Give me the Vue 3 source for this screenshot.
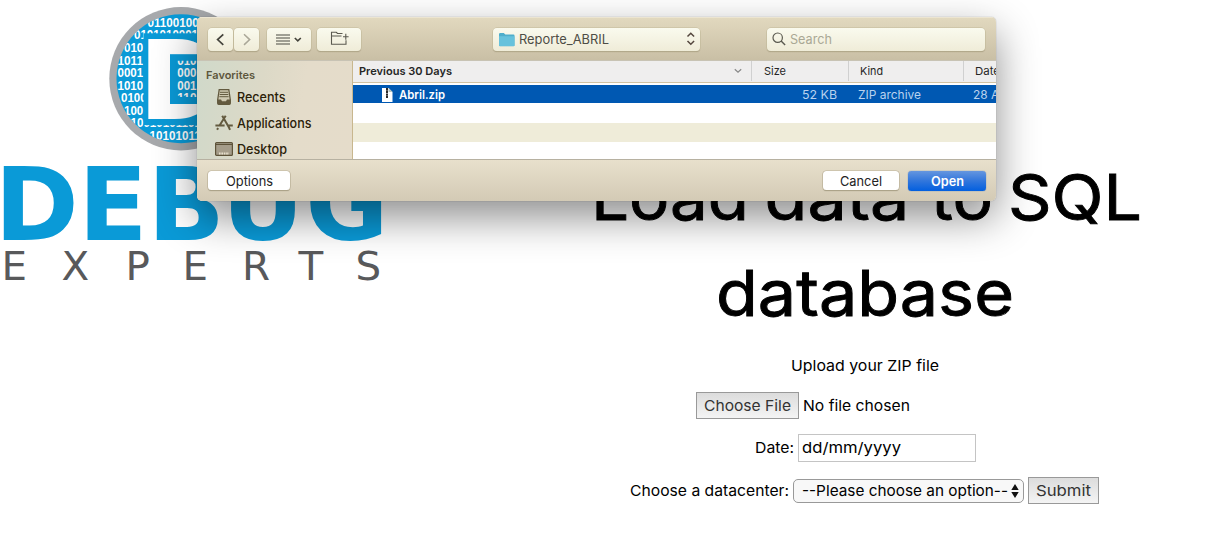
<script setup>
import { h } from 'vue'

// One line of text set to an exact width.
const Fit = (props) =>
  h('svg', { class: 'fit', width: props.w, height: 20 }, [
    h(
      'text',
      {
        x: 0,
        y: 10 + props.s * 0.36,
        'font-size': props.s,
        'font-weight': props.b || 400,
        textLength: props.w,
        lengthAdjust: 'spacingAndGlyphs',
        fill: 'currentColor',
      },
      props.t
    ),
  ])
Fit.props = ['t', 'w', 's', 'b']

const bits = [
  { x: 147.5, y: 27, t: '01100100' },
  { x: 134, y: 39.4, t: '0101010001' },
  { x: 124, y: 52.1, t: '010' },
  { x: 117.5, y: 64.6, t: '1011' },
  { x: 117.5, y: 77.3, t: '0001' },
  { x: 117.5, y: 90, t: '1010' },
  { x: 121, y: 102.4, t: '0100' },
  { x: 124, y: 114.8, t: '100' },
  { x: 130.5, y: 127.4, t: '10010101101' },
  { x: 149.5, y: 140.2, t: '10101011' },
]
const innerBits = [
  { y: 64.6, t: '010' },
  { y: 77.3, t: '000' },
  { y: 90, t: '001' },
  { y: 102.4, t: '110' },
]
</script>

<template>
  <div class="page">
    <svg class="logo" width="400" height="300" viewBox="0 0 400 300">
      <defs>
        <clipPath id="disc"><circle cx="181" cy="78.7" r="64.5" /></clipPath>
        <clipPath id="hole"><rect x="172" y="60.7" width="40" height="36.3" /></clipPath>
      </defs>
      <circle cx="181" cy="78.7" r="71.7" fill="#a7a9ac" />
      <circle cx="181" cy="78.7" r="64.5" fill="#0a9ad7" />
      <g clip-path="url(#disc)" class="bits">
        <text v-for="r in bits" :key="r.y" :x="r.x" :y="r.y" :textLength="r.t.length * 6.4" lengthAdjust="spacingAndGlyphs">{{ r.t }}</text>
        <rect x="143.5" y="33.3" width="80" height="91.8" fill="#0a9ad7" />
      </g>
      <text class="big-d" x="139.8" y="119">D</text>
      <rect x="170" y="54.2" width="30" height="49.8" fill="#0a9ad7" />
      <g clip-path="url(#hole)" class="bits">
        <text v-for="r in innerBits" :key="r.y" x="177.3" :y="r.y" textLength="19.2" lengthAdjust="spacingAndGlyphs">{{ r.t }}</text>
      </g>
      <text class="debug" x="-5.6 78.2 147.4 221.8 305.2" y="239.6">DEBUG</text>
      <text class="experts" x="1.5 58.5 119.5 173.8 230.5 284.3 338.5" y="279.8" transform="scale(1.05 1)">EXPERTS</text>
    </svg>

    <main class="content">
      <svg class="heading" width="730" height="340">
        <text y="219.5">
          <tspan x="91" textLength="158" lengthAdjust="spacingAndGlyphs">Load</tspan>
          <tspan x="264.5" textLength="145" lengthAdjust="spacingAndGlyphs">data</tspan>
          <tspan x="431" textLength="62" lengthAdjust="spacingAndGlyphs">to</tspan>
          <tspan x="508" textLength="134" lengthAdjust="spacingAndGlyphs">SQL</tspan>
        </text>
        <text x="216" y="315.5" textLength="298" lengthAdjust="spacingAndGlyphs">database</text>
      </svg>
      <div class="row upload"><Fit t="Upload your ZIP file" :w="148" :s="15" /></div>
      <div class="row file">
        <span class="btn choose"><Fit t="Choose File" :w="87" :s="15" /></span>
        <Fit t="No file chosen" :w="107" :s="15" />
      </div>
      <div class="row date">
        <Fit t="Date:" :w="39" :s="15" />
        <span class="date-input"><Fit t="dd/mm/yyyy" :w="99" :s="15" /></span>
      </div>
      <div class="row center">
        <Fit t="Choose a datacenter:" :w="159" :s="15" />
        <span class="select">
          <Fit t="--Please choose an option--" :w="206" :s="15" />
          <svg width="8" height="14" viewBox="0 0 8 14"><path d="M4 0 7.7 6H.3zM4 14 .3 8h7.4z" fill="#111" /></svg>
        </span>
        <span class="btn submit"><Fit t="Submit" :w="55" :s="15" /></span>
      </div>
    </main>

    <section class="dialog">
      <header class="toolbar">
        <span class="tb back"><svg width="25" height="23"><path d="M15.3 6.3 9.6 11.6l5.7 5.3" stroke="#45443c" stroke-width="1.7" /></svg></span>
        <span class="tb forward"><svg width="25" height="23"><path d="M10 6.3l5.7 5.3-5.7 5.3" stroke="#aaa798" stroke-width="1.5" /></svg></span>
        <span class="tb view">
          <svg width="44" height="23"><path d="M9 7h14M9 10h14M9 13h14M9 16h14" stroke="#4b4a42" stroke-width="1.1" /><path d="m27.8 10 3 2.9 3-2.9" stroke="#45443c" stroke-width="1.6" /></svg>
        </span>
        <span class="tb folder">
          <svg width="44" height="23"><path d="M25.5 5.5h-5l-1.2-1.2h-4.8v12h14.5v-4M14.5 8h10M28.8 5.8v6M26 8.8h5.6" stroke="#5b5a50" stroke-width="1.1" /></svg>
        </span>
        <span class="tb path">
          <svg width="16" height="15"><path d="M0 2.2Q0 1 1.2 1h3.6l1.5 1.5h8.2q1 0 1 1v9.8q0 1-1 1H1q-1 0-1-1z" fill="#4faecb" /><path d="M0 4.2h15.5v9.2q0 .6-.7.6H.8q-.8 0-.8-.6z" fill="#67c2dc" /></svg>
          <Fit class="path-name" t="Reporte_ABRIL" :w="90" :s="13" />
          <svg width="10" height="14"><path d="m1.5 4.5 3.3-3.2 3.3 3.2M1.5 9l3.3 3.2L8.1 9" stroke="#54463d" stroke-width="1.5" /></svg>
        </span>
        <span class="tb search">
          <svg width="14" height="14"><circle cx="5.7" cy="5.7" r="4.7" stroke="#5b5a50" stroke-width="1.2" /><path d="m9.1 9.1 4 4" stroke="#5b5a50" stroke-width="1.4" /></svg>
          <Fit t="Search" :w="42" :s="13" />
        </span>
      </header>

      <div class="body">
        <aside class="sidebar">
          <div class="fav"><Fit t="Favorites" :w="49" :s="11" :b="600" /></div>
          <div class="place">
            <svg width="18" height="16"><path d="M4.2.7h9.6l1.5 10v3.4q0 1.2-1.2 1.2H3.9q-1.2 0-1.2-1.2v-3.4z" fill="#cec8b0" stroke="#635a3f" stroke-width="1.3" /><path d="M5 3.3h8M4.7 5.5h8.6M4.4 7.7h9.2" stroke="#635a3f" /><path d="M2.5 10.5H6l1 1.8h4l1-1.8h3.5v3.7q0 1.3-1.3 1.3H3.8q-1.3 0-1.3-1.3z" fill="#635a3f" /></svg>
            <Fit t="Recents" :w="48.5" :s="13" :b="500" />
          </div>
          <div class="place">
            <svg width="18" height="16"><path d="M10.7.8 4.2 11M7.2.8 14 12.5l1 2.3M3.1 13l-1 1.8M.4 10.5h9.2M12.8 10.5h5" stroke="#635a3f" stroke-width="2" /></svg>
            <Fit t="Applications" :w="74.5" :s="13" :b="500" />
          </div>
          <div class="place">
            <svg width="18" height="16"><rect x=".6" y="1.6" width="16.8" height="12.8" rx="1" fill="#a59d8a" stroke="#5d5339" stroke-width="1.2" /><path d="M1 3.5h16" stroke="#5d5339" /><path d="M4 12.5h10" stroke="#e8e1cd" stroke-width="2" stroke-dasharray="1.6 .8" /></svg>
            <Fit t="Desktop" :w="50" :s="13" :b="500" />
          </div>
        </aside>
        <div class="files">
          <div class="cols">
            <span class="c-name"><Fit t="Previous 30 Days" :w="93" :s="11" :b="600" /><svg width="8" height="6"><path d="m.8 1.3 3.2 3 3.2-3" stroke="#888" stroke-width="1.2" /></svg></span>
            <span class="c-size"><Fit t="Size" :w="22" :s="11" /></span>
            <span class="c-kind"><Fit t="Kind" :w="23" :s="11" /></span>
            <span class="c-date"><Fit t="Date" :w="25" :s="11" /></span>
          </div>
          <div class="item">
            <svg class="zip" width="11" height="14"><path d="M0 0h6.5l4 4v10H0z" fill="#fff" /><path d="M6.5 0v4h4z" fill="#b9c4bd" /><path d="M5 0v10" stroke="#2c2a28" stroke-width="2" stroke-dasharray="2.4 .3" /></svg>
            <Fit class="i-name" t="Abril.zip" :w="46" :s="12" :b="600" />
            <Fit class="i-size" t="52 KB" :w="35" :s="12" />
            <Fit class="i-kind" t="ZIP archive" :w="63" :s="12" />
            <Fit class="i-date" t="28 Apr" :w="38" :s="12" />
          </div>
          <div class="stripe"></div>
        </div>
      </div>

      <footer class="actions">
        <span class="act options"><Fit t="Options" :w="47" :s="13" /></span>
        <span class="act cancel"><Fit t="Cancel" :w="42" :s="13" /></span>
        <span class="act open"><Fit t="Open" :w="33" :s="13" :b="600" /></span>
      </footer>
    </section>
  </div>
</template>

<style>
body { margin: 0; background: #fff; }
svg { display: block; flex: none; fill: none; }
.fit { overflow: visible; }
</style>

<style scoped>
.page { position: relative; width: 1230px; height: 534px; overflow: hidden; display: flex; font-family: Inter, "Liberation Sans", sans-serif; color: #000; }
.logo { width: 400px; }
.bits text { font: bold 12px "Liberation Sans", sans-serif; fill: #fff; }
.big-d { font: 800 112px "Open Sans", sans-serif; fill: #fff; }
.debug { font: bold 101.5px "DejaVu Sans", sans-serif; fill: #0a9ad7; }
.experts { font: 38.5px "DejaVu Sans", sans-serif; fill: #58595b; }

.content { margin-left: 100px; width: 730px; display: flex; flex-direction: column; align-items: center; }
.heading text { font-size: 63.5px; font-weight: 400; fill: #000; stroke: #000; stroke-width: .9px; }
.row { display: flex; align-items: center; }
.upload { height: 52px; }
.file { height: 27px; width: 338px; gap: 4px; }
.date { height: 28px; margin-top: 15px; gap: 4px; }
.center { height: 27px; margin-top: 15px; gap: 4px; margin-right: 1px; }
.btn { box-sizing: border-box; height: 27px; border: 1px solid #999; background: linear-gradient(#dcdcdc, #f4f4f4); color: #333; display: flex; align-items: center; justify-content: center; }
.choose { width: 103px; }
.submit { width: 71px; }
.date-input { box-sizing: border-box; width: 178px; height: 28px; border: 1px solid #c4c4c4; padding-left: 3px; display: flex; align-items: center; }
.select { box-sizing: border-box; width: 231px; height: 24px; border: 1px solid #999; border-radius: 5px; background: #f8f8f8; padding: 0 4px 0 8px; display: flex; align-items: center; justify-content: space-between; }

.dialog { position: absolute; left: 197px; top: 17px; width: 799px; height: 184px; border-radius: 5px; overflow: hidden; background: #fff; display: flex; flex-direction: column; box-shadow: 0 0 1px rgba(0,0,0,.45), 0 16px 42px rgba(0,0,0,.45); }
.toolbar { box-sizing: border-box; height: 44px; padding-left: 11px; display: flex; align-items: flex-start; padding-top: 10.5px; background: linear-gradient(#e2d9bf, #c9bfa5); border-bottom: 1px solid #c8c3b4; box-shadow: inset 0 1px #ece5d1; }
.tb { height: 23px; border-radius: 4px; background: linear-gradient(#fafaee, #efecd8); box-shadow: 0 0 0 .5px #c2b999, 0 1px 1px rgba(100,90,60,.45); display: flex; align-items: center; }
.back { width: 25px; }
.forward { width: 25px; margin-left: 1px; }
.view { width: 44px; margin-left: 8px; }
.folder { width: 44px; margin-left: 6px; }
.path { width: 207px; margin-left: 132px; color: #4e4d45; padding-right: 4px; padding-left: 6px; box-sizing: border-box; }
.path-name { margin-left: 4px; margin-right: auto; }
.search { box-sizing: border-box; width: 218px; margin-left: 67px; padding-left: 5px; gap: 4px; color: #aaa895; }

.body { height: 98px; display: flex; }
.sidebar { box-sizing: border-box; width: 156px; height: 98px; padding: 4px 0 0 9px; border-right: 1px solid #c8b78e; background: linear-gradient(100deg, #d0d9ca, #dcd9c7 40%, #e4dcca 65%, #e5dcca); overflow: hidden; }
.fav { color: #5d563c; height: 22px; }
.place { height: 26px; padding-left: 9px; display: flex; align-items: center; gap: 4px; color: #2b2109; }
.place:nth-child(2) { margin-top: -3px; }
.files { flex: 1; overflow: hidden; }
.cols { height: 21px; background: #efeeee; border-bottom: 1px solid #d2c3a4; display: flex; align-items: flex-start; color: #262626; }
.cols > span { box-sizing: border-box; height: 20px; display: flex; align-items: center; border-left: 1px solid #d0d0d0; flex: none; }
.cols .c-name { width: 398px; border: 0; padding: 0 9px 0 6px; justify-content: space-between; }
.cols .c-size { width: 97px; padding-left: 12px; }
.cols .c-kind { width: 115px; padding-left: 11px; }
.cols .c-date { width: 100px; padding-left: 11px; }
.item { box-sizing: border-box; height: 18px; padding-top: 1px; margin-top: 2px; background: #0058b2; color: #b9d2ee; display: flex; align-items: center; }
.zip { margin-left: 29px; }
.i-name { margin-left: 6px; color: #fff; }
.i-size { margin-left: 357px; }
.i-kind { margin-left: 21px; }
.i-date { margin-left: 52px; }
.stripe { height: 19px; margin-top: 20px; background: #efecd9; }

.actions { box-sizing: border-box; height: 42px; border-top: 1px solid #b7b1a1; background: linear-gradient(#e8e0cc, #d3cab5); padding: 11px 10px 0 11px; display: flex; }
.act { height: 19px; border-radius: 3.5px; background: #fff; box-shadow: 0 0 0 .6px #b9af96, 0 1px 1px rgba(90,80,50,.5); display: flex; align-items: center; justify-content: center; color: #222; }
.options { width: 82px; }
.cancel { width: 76px; margin-left: auto; }
.open { width: 78px; margin-left: 9px; height: 20px; background: linear-gradient(#6596df, #3176dc 50%, #025fdf); color: #fff; box-shadow: 0 0 1px #1859b5; }
</style>
